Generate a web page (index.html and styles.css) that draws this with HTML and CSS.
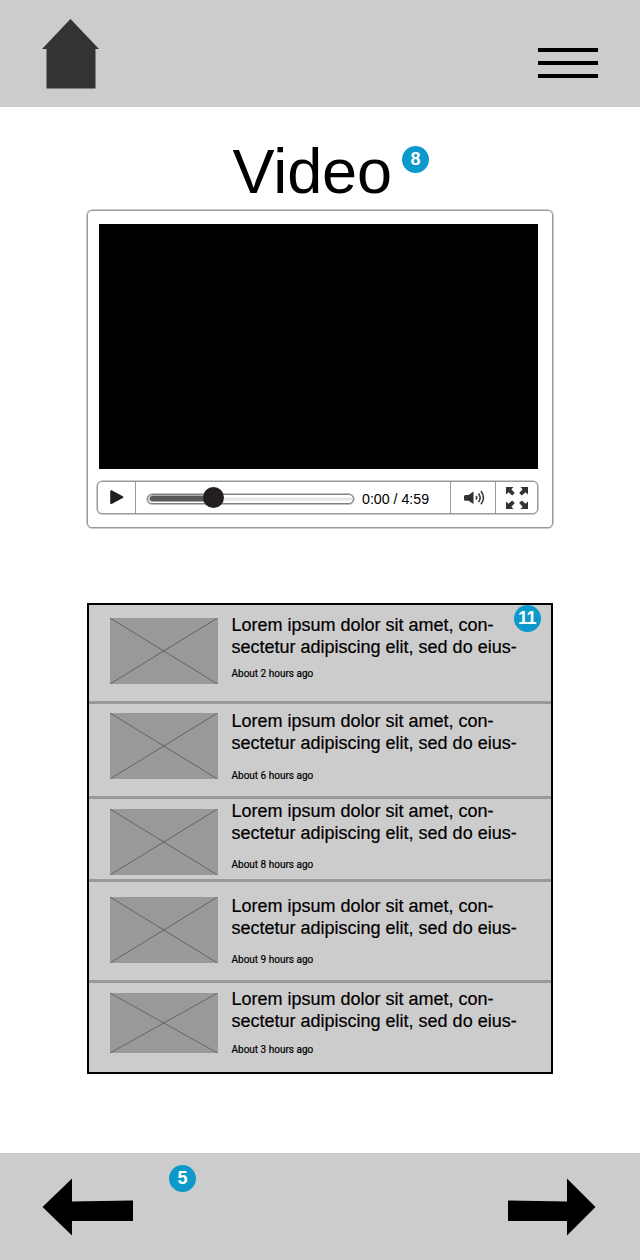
FILE: index.html
```html
<!DOCTYPE html>
<html lang="en">
<head>
<meta charset="utf-8">
<title>Video</title>
<link rel="stylesheet" href="styles.css">
</head>
<body>
<header class="topbar">
  <svg class="home" width="57" height="70" viewBox="0 0 57 70"><path fill="#333" d="M28.5 0 57 30H53.5V69.5H4.5V30H0Z"/></svg>
  <div class="menu"><span></span><span></span><span></span></div>
</header>
<main class="content">
  <h1 class="title"><span class="title-text">Video</span><span class="badge badge-title">8</span></h1>
  <section class="player">
    <div class="screen"></div>
    <div class="controls">
      <div class="play"><svg width="14" height="15" viewBox="0 0 14 15"><path d="M1.2 1.2V13L12.3 7.2Z" fill="#231f20" stroke="#231f20" stroke-width="2" stroke-linejoin="round"/></svg></div>
      <div class="timeline">
        <div class="track"><div class="rail"><div class="progress"></div></div><div class="knob"></div></div>
        <span class="time">0:00 / 4:59</span>
      </div>
      <div class="volume"><svg width="24" height="18" viewBox="0 0 24 18"><path fill="#333" d="M2.5 6H5.5L10.5 2.5V15L5.5 11.8H2.5Q1 11.8 1 10.3V7.5Q1 6 2.5 6Z"/><g fill="none" stroke="#333" stroke-width="1.5"><path d="M13 7Q14.6 8.7 13 10.5"/><path d="M15.5 4.5Q18.8 8.7 15.5 13"/><path d="M18 2Q22.8 8.7 18 15.3"/></g></svg></div>
      <div class="expand"><svg width="22" height="22" viewBox="0 0 22 22" fill="#333"><path id="corner" d="M0 0H7.5L5.4 2.3 8.8 6 6.2 8.6 2.5 5.2 0 7.5Z"/><use href="#corner" transform="matrix(-1 0 0 1 22 0)"/><use href="#corner" transform="matrix(1 0 0 -1 0 22)"/><use href="#corner" transform="matrix(-1 0 0 -1 22 22)"/></svg></div>
    </div>
  </section>
  <section class="list">
    <span class="badge badge-list">11</span>
    <article class="row row-1">
      <svg class="thumb" viewBox="0 0 108 66" preserveAspectRatio="none"><path d="M0 0 108 66M108 0 0 66"/></svg>
      <div class="copy"><p class="text">Lorem ipsum dolor sit amet, con-<br>sectetur adipiscing elit, sed do eius-</p><p class="ago">About 2 hours ago</p></div>
    </article>
    <article class="row row-2">
      <svg class="thumb" viewBox="0 0 108 66" preserveAspectRatio="none"><path d="M0 0 108 66M108 0 0 66"/></svg>
      <div class="copy"><p class="text">Lorem ipsum dolor sit amet, con-<br>sectetur adipiscing elit, sed do eius-</p><p class="ago">About 6 hours ago</p></div>
    </article>
    <article class="row row-3">
      <svg class="thumb" viewBox="0 0 108 66" preserveAspectRatio="none"><path d="M0 0 108 66M108 0 0 66"/></svg>
      <div class="copy"><p class="text">Lorem ipsum dolor sit amet, con-<br>sectetur adipiscing elit, sed do eius-</p><p class="ago">About 8 hours ago</p></div>
    </article>
    <article class="row row-4">
      <svg class="thumb" viewBox="0 0 108 66" preserveAspectRatio="none"><path d="M0 0 108 66M108 0 0 66"/></svg>
      <div class="copy"><p class="text">Lorem ipsum dolor sit amet, con-<br>sectetur adipiscing elit, sed do eius-</p><p class="ago">About 9 hours ago</p></div>
    </article>
    <article class="row row-5">
      <svg class="thumb" viewBox="0 0 108 66" preserveAspectRatio="none"><path d="M0 0 108 66M108 0 0 66"/></svg>
      <div class="copy"><p class="text">Lorem ipsum dolor sit amet, con-<br>sectetur adipiscing elit, sed do eius-</p><p class="ago">About 3 hours ago</p></div>
    </article>
  </section>
</main>
<footer class="bottombar">
  <svg width="91" height="58" viewBox="0 0 91 58"><path d="M.5 29 30 .5V23.5L91 22.5V43H30V57.5Z"/></svg>
  <span class="badge badge-nav">5</span>
  <svg class="next" width="88" height="58" viewBox="0 0 88 58"><path d="M87.5 29 59 .5V23.5L0 22.5V43H59V57.5Z"/></svg>
</footer>
</body>
</html>
```
FILE: styles.css
```css
* { box-sizing: border-box; }
body {
  margin: 0;
  width: 640px;
  height: 1260px;
  display: flex;
  flex-direction: column;
  background: #fff;
  color: #000;
  font-family: "Liberation Sans", Arial, sans-serif;
}
svg { display: block; flex: none; }
p, h1 { margin: 0; }

.topbar {
  height: 107px;
  flex: none;
  display: flex;
  justify-content: space-between;
  align-items: flex-start;
  padding: 19px 42px 0 42px;
  background: #ccc;
}
.menu {
  display: flex;
  flex-direction: column;
  gap: 9px;
  width: 60px;
  padding-top: 29px;
}
.menu span { height: 4px; background: #000; }

.content { flex: 1; padding: 0 87px; }
.title {
  display: flex;
  height: 103px;
  padding: 29px 0 0 145.5px;
  font-weight: 400;
}
.title-text { font-size: 63px; line-height: 71px; letter-spacing: -0.1px; }
.badge {
  display: block;
  flex: none;
  width: 27px;
  height: 27px;
  border-radius: 50%;
  background: #0c99cb;
  color: #fff;
  font-size: 18px;
  font-weight: 700;
  line-height: 27px;
  text-align: center;
}
.badge-title { margin: 10px 0 0 10px; }

.player {
  width: 466px;
  height: 318px;
  padding: 13px 14px 0 9px;
  border: 1px solid #999;
  border-radius: 5px;
  box-shadow: 0 0 0 0.5px #999;
}
.screen { height: 245px; margin-left: 2px; background: #000; }
.controls {
  display: flex;
  height: 33px;
  margin-top: 12px;
  border: 1px solid #999;
  border-radius: 5px;
  box-shadow: 0 0 0 0.5px #999;
}
.play { width: 37px; padding: 8px 0 0 11.5px; }
.timeline {
  flex: 1;
  display: flex;
  padding-left: 11px;
  border-left: 1px solid #999;
  border-right: 1px solid #999;
}
.track { position: relative; width: 207px; padding-top: 11.5px; }
.rail {
  height: 10px;
  padding: 1.5px;
  border: 1px solid #808080;
  border-radius: 6px;
  background: linear-gradient(#fff 25%, #ddd 50%, #fff 80%);
  box-shadow: 0 0 0 0.5px #808080;
}
.progress { width: 62px; height: 5px; border-radius: 3px; background: #595959; box-shadow: 0 0 0 1px #aaa; }
.knob {
  position: absolute;
  left: 56px;
  top: 5px;
  width: 21px;
  height: 21px;
  border-radius: 50%;
  background: #231f20;
}
.time { padding-left: 8px; font-size: 14.2px; line-height: 34px; white-space: nowrap; }
.volume { width: 44.5px; padding: 6.5px 0 0 12px; }
.expand { width: 42px; padding: 5px 0 0 9.5px; border-left: 1px solid #999; }

.list {
  position: relative;
  width: 466px;
  height: 471px;
  margin-top: 75px;
  border: 2px solid #000;
  background: #ccc;
}
.badge-list { position: absolute; left: 424.5px; top: 0; letter-spacing: -0.5px; }
.row {
  display: flex;
  gap: 14px;
  padding-left: 21px;
  border-bottom: 3px solid #999;
}
.thumb { width: 107.5px; height: 66px; background: #999; }
.thumb path { fill: none; stroke: #555; stroke-width: 0.8; }
.text { font-size: 18px; line-height: 21.7px; white-space: nowrap; -webkit-text-stroke: 0.2px #000; }
.ago {
  font-family: Roboto, "Liberation Sans", sans-serif;
  font-size: 10px;
  font-weight: 400;
  line-height: 12px;
  -webkit-text-stroke: 0.2px #000;
}
.row-1 { height: 99px; }
.row-1 .thumb { margin-top: 13.4px; }
.row-1 .copy { padding-top: 10px; }
.row-1 .ago { margin-top: 10px; }
.row-2 { height: 95px; }
.row-2 .thumb { margin-top: 9.4px; }
.row-2 .copy { padding-top: 7px; }
.row-2 .ago { margin-top: 16px; }
.row-3 { height: 83px; }
.row-3 .thumb { margin-top: 9.5px; }
.row-3 .copy { padding-top: 2px; }
.row-3 .ago { margin-top: 15px; }
.row-4 { height: 101px; }
.row-4 .thumb { margin-top: 14.5px; }
.row-4 .copy { padding-top: 14px; }
.row-4 .ago { margin-top: 15px; }
.row-5 { height: 89px; border-bottom: 0; }
.row-5 .thumb { height: 60px; margin-top: 10px; }
.row-5 .copy { padding-top: 6px; }
.row-5 .ago { margin-top: 12px; }

.bottombar {
  height: 107.5px;
  flex: none;
  display: flex;
  align-items: flex-start;
  padding: 25px 44px 0 42px;
  background: #ccc;
}
.badge-nav { margin: -12.5px 0 0 36px; }
.next { margin-left: auto; }
```
